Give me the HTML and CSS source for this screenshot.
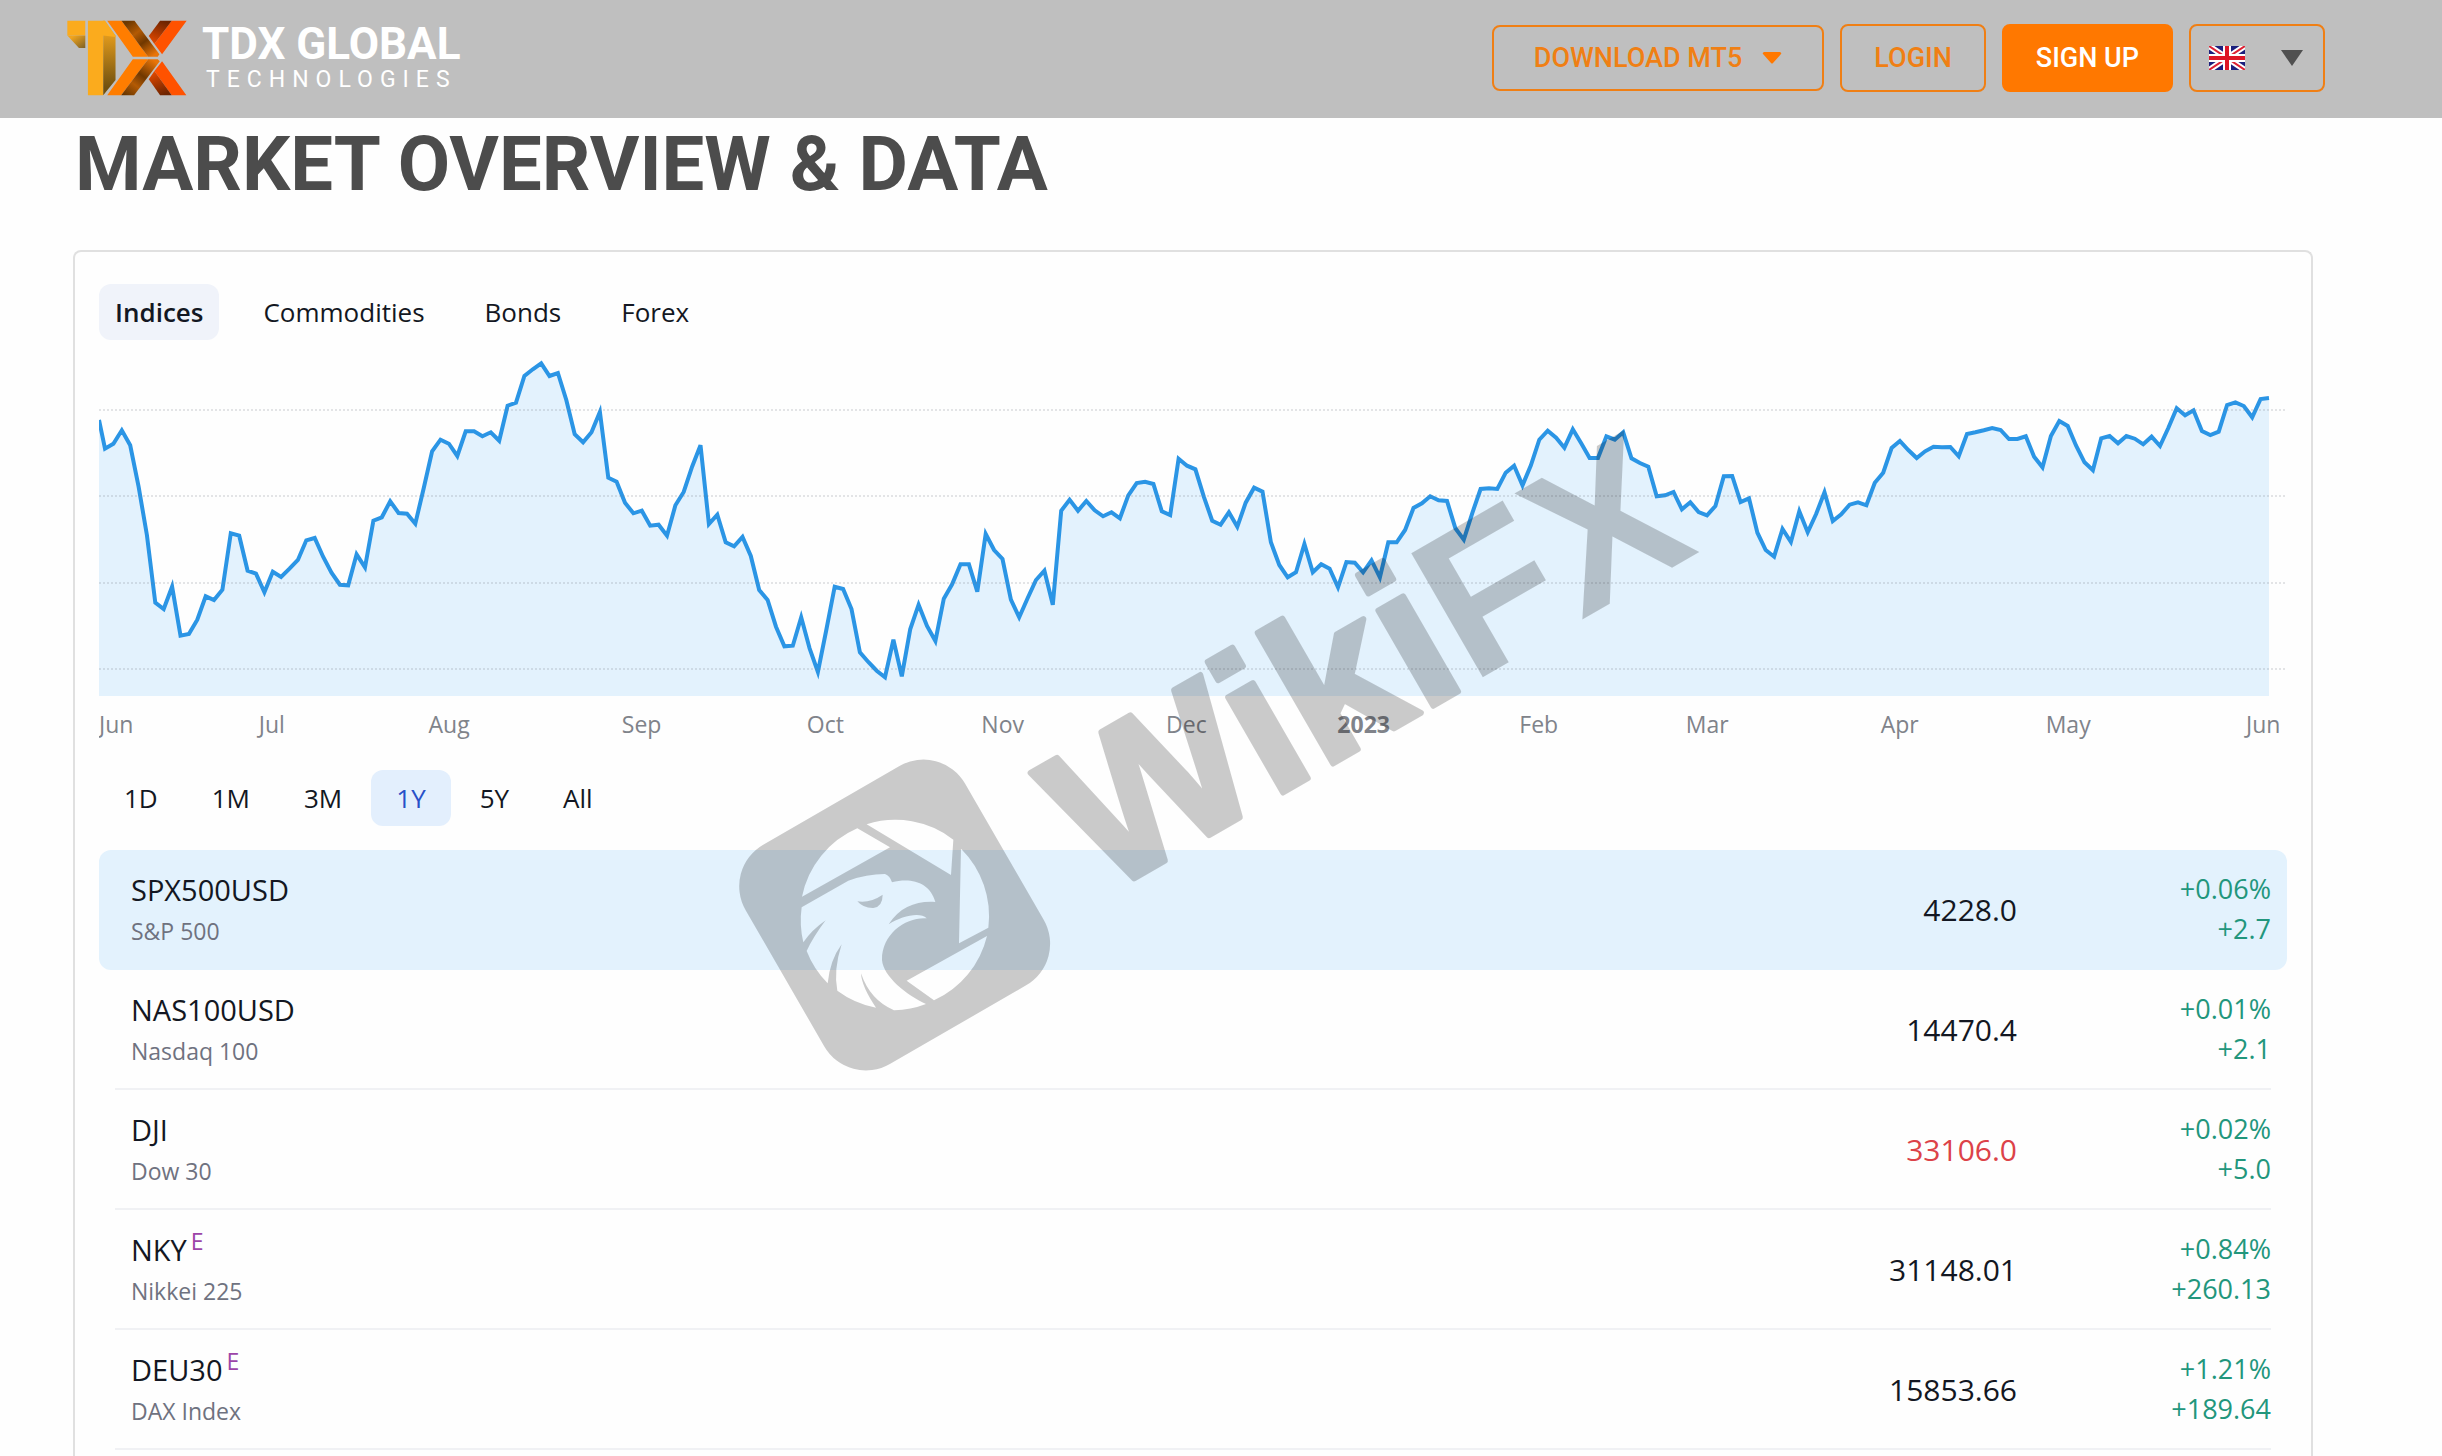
FILE: index.html
```html
<!DOCTYPE html>
<html lang="en">
<head>
    <meta charset="UTF-8">
    <meta name="viewport" content="width=device-width, initial-scale=1.0">
    <title>TDX Global Technologies - Market Overview</title>
    <link rel="stylesheet" href="styles.css">
</head>
<body>

<header class="topbar">
    <a class="brand" href="#">
        <svg class="brand-mark" viewBox="82 61 361 226" aria-hidden="true">
            <defs>
                <linearGradient id="foldT" x1="0" y1="0" x2="1" y2="1">
                    <stop offset="0.2" stop-color="#f0a41e"/>
                    <stop offset="1" stop-color="#7c6026"/>
                </linearGradient>
                <linearGradient id="foldD" x1="0" y1="0" x2="0" y2="1">
                    <stop offset="0.1" stop-color="#f0a41e"/>
                    <stop offset="0.9" stop-color="#70500f"/>
                </linearGradient>
                <linearGradient id="foldX1" x1="0" y1="0" x2="0.8" y2="1">
                    <stop offset="0.1" stop-color="#6b3800"/>
                    <stop offset="0.4" stop-color="#b35a04"/>
                    <stop offset="0.65" stop-color="#703800"/>
                    <stop offset="1" stop-color="#e87408"/>
                </linearGradient>
                <linearGradient id="foldX2" x1="0.8" y1="0" x2="0" y2="1">
                    <stop offset="0" stop-color="#e87408"/>
                    <stop offset="0.4" stop-color="#703800"/>
                    <stop offset="0.65" stop-color="#b35a04"/>
                    <stop offset="1" stop-color="#5b3000"/>
                </linearGradient>
                <linearGradient id="foldR1" x1="0.6" y1="0" x2="0.2" y2="1">
                    <stop offset="0" stop-color="#6e2400"/>
                    <stop offset="1" stop-color="#e64a00"/>
                </linearGradient>
                <linearGradient id="foldR2" x1="0.2" y1="0" x2="0.6" y2="1">
                    <stop offset="0" stop-color="#e64a00"/>
                    <stop offset="1" stop-color="#6e2400"/>
                </linearGradient>
            </defs>
            <path fill="#fbab1d" d="M83 62h54v44H83zM145 62h46v224h-46z"/>
            <path fill="url(#foldT)" d="M83 106h54v38h-19z"/>
            <path fill="url(#foldD)" d="M191 62h5l32 45v133l-37 46z"/>
            <path fill="#fbab1d" d="M190 62h6l32 45v4l-38-5z"/>
            <path fill="#ff7d00" d="M203 62h43l80 108h-46zM280 178h46l-81 108h-42z"/>
            <path fill="url(#foldX1)" d="M246 62h39l75 101-5 7h-29z"/>
            <path fill="url(#foldX2)" d="M326 178h29l6 6-77 102h-39z"/>
            <path fill="#ff5200" d="M397 62h45l-74 101-23-31zM368 184l73 102h-44l-52-73z"/>
            <path fill="url(#foldR1)" d="M362 62h35l-52 70-17-24z"/>
            <path fill="url(#foldR2)" d="M345 213l52 73h-35l-34-48z"/>
        </svg>
        <span class="brand-text">
            <span class="brand-name">TDX GLOBAL</span>
            <span class="brand-sub">TECHNOLOGIES</span>
        </span>
    </a>
    <nav class="actions">
        <button type="button" class="btn btn-download">
            DOWNLOAD MT5
            <svg class="caret" viewBox="0 0 20 12" aria-hidden="true"><path d="M2 0h16q2 1 1 2l-8 9q-1 1-2 0L1 2q-1-1 1-2z"/></svg>
        </button>
        <button type="button" class="btn">LOGIN</button>
        <button type="button" class="btn btn-fill">SIGN UP</button>
        <button type="button" class="btn btn-lang" aria-label="Language: English">
            <svg class="flag" viewBox="0 0 36 24" aria-hidden="true">
                <path fill="#1c1f7d" d="M0 0h36v24H0z"/>
                <path stroke="#fff" stroke-width="6" d="M0 0l36 24M36 0L0 24"/>
                <path stroke="#dd2234" stroke-width="2" d="M0 0l36 24M36 0L0 24"/>
                <path stroke="#fff" stroke-width="8" d="M18 0v24M0 12h36"/>
                <path stroke="#dd1626" stroke-width="4" d="M18 0v24M0 12h36"/>
            </svg>
            <svg class="arrow" viewBox="0 0 22 16" aria-hidden="true"><path d="M0 0h22L11 16z"/></svg>
        </button>
    </nav>
</header>

<main class="page">
    <h1>MARKET OVERVIEW &amp; DATA</h1>

    <section class="card">
        <div class="tabs">
            <button type="button" class="tab active">Indices</button>
            <button type="button" class="tab">Commodities</button>
            <button type="button" class="tab">Bonds</button>
            <button type="button" class="tab">Forex</button>
        </div>

        <svg class="chart" role="img" aria-label="S&amp;P 500, last year">
            <svg width="100%" height="356" viewBox="0 0 2188 356" preserveAspectRatio="none">
                <polygon id="area" class="area"/>
                <polyline id="line" class="line"/>
            </svg>
            <g class="grid">
                <line x1="0" x2="100%" y1="70" y2="70"/>
                <line x1="0" x2="100%" y1="156" y2="156"/>
                <line x1="0" x2="100%" y1="243" y2="243"/>
                <line x1="0" x2="100%" y1="329" y2="329"/>
            </g>
            <g class="months">
                <text x="0" y="393" class="first">Jun</text>
                <text x="7.9%" y="393">Jul</text>
                <text x="16%" y="393">Aug</text>
                <text x="24.8%" y="393">Sep</text>
                <text x="33.2%" y="393">Oct</text>
                <text x="41.3%" y="393">Nov</text>
                <text x="49.7%" y="393">Dec</text>
                <text x="57.8%" y="393" class="year">2023</text>
                <text x="65.8%" y="393">Feb</text>
                <text x="73.5%" y="393">Mar</text>
                <text x="82.3%" y="393">Apr</text>
                <text x="90%" y="393">May</text>
                <text x="99.7%" y="393" class="last">Jun</text>
            </g>
        </svg>

        <div class="ranges">
            <button type="button" class="range">1D</button>
            <button type="button" class="range">1M</button>
            <button type="button" class="range">3M</button>
            <button type="button" class="range active">1Y</button>
            <button type="button" class="range">5Y</button>
            <button type="button" class="range">All</button>
        </div>

        <table class="quotes">
            <tbody>
                <tr class="active">
                    <th scope="row">SPX500USD<small>S&amp;P 500</small></th>
                    <td class="price">4228.0</td>
                    <td class="change">+0.06%<br>+2.7</td>
                </tr>
                <tr>
                    <th scope="row">NAS100USD<small>Nasdaq 100</small></th>
                    <td class="price">14470.4</td>
                    <td class="change">+0.01%<br>+2.1</td>
                </tr>
                <tr>
                    <th scope="row">DJI<small>Dow 30</small></th>
                    <td class="price down">33106.0</td>
                    <td class="change">+0.02%<br>+5.0</td>
                </tr>
                <tr>
                    <th scope="row">NKY<sup>E</sup><small>Nikkei 225</small></th>
                    <td class="price">31148.01</td>
                    <td class="change">+0.84%<br>+260.13</td>
                </tr>
                <tr>
                    <th scope="row">DEU30<sup>E</sup><small>DAX Index</small></th>
                    <td class="price">15853.66</td>
                    <td class="change">+1.21%<br>+189.64</td>
                </tr>
            </tbody>
        </table>
    </section>
</main>

<!-- Watermark -->
<svg class="watermark" viewBox="730 300 1060 800" aria-hidden="true">
    <mask id="eagle" maskUnits="userSpaceOnUse" x="-20" y="-20" width="1100" height="1100">
        <rect x="144" y="145" width="760" height="760" rx="144" fill="#fff" transform="rotate(-30 524 525)"/>
        <path fill="#000" d="M412 265L510 322 246 470A285 285 0 0 1 412 265zM440 253A285 285 0 0 1 700 299L693 405zM723 326A285 285 0 0 1 805 563L717 610zM801 588A285 285 0 0 1 642 781L560 722z"/>
        <path fill="#000" d="M245 502L385 422Q440 402 495 402 510 408 516 427C570 412 630 425 646 486 590 482 540 500 506 553 545 528 600 515 620 535 560 530 485 580 486 660 490 710 560 765 618 792A285 285 0 0 1 522 811Q450 780 423 700 425 740 468 803A285 285 0 0 1 352 752Q340 690 365 613 330 660 323 730A285 285 0 0 1 260 633Q280 590 317 541 275 570 250 607A285 285 0 0 1 245 502z"/>
        <path fill="#fff" d="M412 484Q450 490 488 464 488 500 460 504 430 505 412 484z"/>
    </mask>
    <g transform="translate(720 740) scale(0.33333)">
        <rect x="40" y="40" width="970" height="970" mask="url(#eagle)"/>
    </g>
    <text transform="translate(1102 897) rotate(-30)"><tspan class="wm-wiki">Wiki</tspan>FX</text>
</svg>

<script>
    const closes = [
        326, 311, 271, 316, 440, 585, 788, 807, 740, 887, 882, 839, 769, 780, 749, 580, 587, 692, 701, 757,
        695, 711, 686, 660, 601, 594, 650, 698, 734, 736, 643, 682, 542, 532, 484, 519, 521, 551, 445, 334,
        299, 311, 348, 274, 274, 289, 277, 302, 197, 188, 108, 88, 70, 108, 99, 180, 283, 307, 277, 216,
        413, 425, 488, 520, 512, 557, 554, 587, 496, 456, 380, 316, 552, 524, 607, 619, 591, 648, 750, 780,
        860, 919, 917, 832, 925, 996, 870, 740, 747, 807, 937, 966, 992, 1012, 899, 1009, 868, 794, 858, 903,
        776, 733, 673, 673, 755, 582, 630, 657, 779, 832, 775, 720, 692, 794, 512, 479, 512, 483, 511, 529,
        517, 535, 466, 429, 425, 432, 514, 525, 356, 377, 388, 470, 542, 554, 517, 560, 488, 443, 455, 607,
        675, 712, 697, 612, 697, 673, 686, 742, 666, 668, 697, 661, 712, 607, 607, 570, 504, 490, 469, 481,
        483, 565, 599, 520, 447, 445, 447, 398, 377, 436, 376, 299, 272, 293, 323, 268, 310, 354, 354, 289,
        299, 277, 355, 369, 380, 469, 466, 456, 508, 487, 516, 526, 498, 409, 408, 486, 475, 578, 630, 650,
        567, 606, 514, 577, 522, 457, 543, 523, 494, 487, 496, 428, 398, 324, 303, 330, 354, 334, 320, 322,
        321, 349, 282, 277, 271, 264, 270, 297, 297, 289, 350, 382, 288, 243, 258, 317, 367, 391, 295, 288,
        310, 288, 296, 313, 290, 318, 264, 205, 226, 211, 273, 285, 275, 195, 187, 198, 232, 177, 174
    ];
    const step = (2170 - 6) / (closes.length - 1);
    const points = ['0,80'];

    closes.forEach(function(value, i) {
        points.push((6 + i * step).toFixed(1) + ',' + (value / 3).toFixed(1));
    });

    document.getElementById('line').setAttribute('points', points.join(' '));
    document.getElementById('area').setAttribute('points', '0,356 ' + points.join(' ') + ' 2170,356');
</script>

</body>
</html>
```
FILE: styles.css
```css
* {
    box-sizing: border-box;
}
body {
    display: flex;
    flex-direction: column;
    position: relative;
    height: 100vh;
    margin: 0;
    overflow: hidden;
    background-color: #fefefe;
    color: #131722;
    font-family: "Open Sans", "Noto Sans", sans-serif;
}
button {
    border: none;
    background: none;
    color: inherit;
    font: inherit;
    cursor: pointer;
}

/* Header */
.topbar {
    display: flex;
    flex-shrink: 0;
    align-items: center;
    justify-content: space-between;
    height: 118px;
    padding: 0 117px 2px 67px;
    background-color: #bfbfbf;
    font-family: Roboto, sans-serif;
}
.brand {
    display: flex;
    align-items: center;
    gap: 15px;
    color: #fff;
    text-decoration: none;
}
.brand-mark {
    width: 120px;
    height: 76px;
}
.brand-text {
    display: flex;
    flex-direction: column;
}
.brand-name {
    font-size: 44px;
    font-weight: 700;
    line-height: 44px;
}
.brand-sub {
    padding-left: 4px;
    font-size: 23px;
    line-height: 28px;
    letter-spacing: 7px;
}
.actions {
    display: flex;
    align-items: center;
    gap: 16px;
}
.btn {
    display: flex;
    align-items: center;
    height: 68px;
    padding: 0 32px;
    border: 2px solid #f07f14;
    border-radius: 8px;
    color: #f07f14;
    font-size: 27px;
    font-weight: 500;
}
.btn-download {
    gap: 20px;
    height: 66px;
    padding: 0 40px;
}
.caret {
    width: 20px;
    height: 12px;
    fill: #ff7800;
}
.btn-fill {
    border-color: #ff7800;
    background-color: #ff7800;
    color: #fff;
}
.btn-lang {
    gap: 36px;
    padding: 0 20px 0 18px;
}
.flag {
    width: 36px;
    height: 24px;
}
.arrow {
    width: 22px;
    height: 16px;
    fill: #505050;
}

/* Market overview */
.page {
    display: flex;
    flex: 1;
    flex-direction: column;
    padding: 0 129px 0 73px;
}
h1 {
    margin: 0;
    padding: 6px 0 46px 2px;
    color: #4c4c4c;
    font-family: Roboto, sans-serif;
    font-size: 76px;
    font-weight: 700;
    line-height: 80px;
}
.card {
    flex: 1;
    padding: 32px 24px 0;
    border: 2px solid #e0e0e0;
    border-bottom: none;
    border-radius: 8px 8px 0 0;
}
.tabs {
    display: flex;
    gap: 28px;
}
.tab {
    height: 56px;
    padding: 0 16px;
    border-radius: 12px;
    font-size: 26px;
}
.tab.active {
    background-color: #f0f3fa;
    font-weight: 600;
}
.chart {
    display: block;
    width: 100%;
    height: 430px;
}
.area {
    fill: #e3f2fd;
}
.line {
    fill: none;
    stroke: #2b95e5;
    stroke-width: 4;
}
.grid line {
    stroke: #787b86;
    stroke-opacity: 0.2;
    stroke-width: 2;
    stroke-dasharray: 2 2;
}
.months text {
    fill: #80838a;
    font-size: 23px;
    text-anchor: middle;
}
.months .first {
    text-anchor: start;
}
.months .last {
    text-anchor: end;
}
.months .year {
    font-weight: 700;
}
.ranges {
    display: flex;
    gap: 4px;
    margin-bottom: 24px;
}
.range {
    height: 56px;
    padding: 0 25px;
    border-radius: 12px;
    font-size: 26px;
}
.range.active {
    background-color: #e3effd;
    color: #2850c8;
}

/* Quotes */
.quotes {
    width: 100%;
    border-collapse: separate;
    border-spacing: 0;
}
.quotes tr {
    position: relative;
    height: 120px;
}
.quotes tr::after {
    content: "";
    position: absolute;
    right: 16px;
    bottom: 0;
    left: 16px;
    height: 2px;
    background-color: #f0f1f4;
}
.quotes tr.active::after {
    display: none;
}
.quotes .active th,
.quotes .active td {
    background-color: #e3f2fd;
}
.quotes .active th {
    border-radius: 12px 0 0 12px;
}
.quotes .active td:last-child {
    border-radius: 0 12px 12px 0;
}
.quotes th {
    padding: 0 0 0 32px;
    font-size: 29px;
    font-weight: 400;
    line-height: 42px;
    text-align: left;
}
.quotes small {
    display: block;
    color: #6f7280;
    font-size: 23px;
    line-height: 40px;
}
.quotes sup {
    margin-left: 4px;
    color: #9c45a8;
    font-size: 23px;
    line-height: 0;
}
.quotes td {
    padding: 0 0 2px;
    text-align: right;
}
.quotes .price {
    font-size: 30px;
}
.quotes .down {
    color: #dc4248;
}
.quotes .change {
    width: 270px;
    padding-right: 16px;
    color: #22967c;
    font-size: 27px;
    line-height: 40px;
}

.watermark {
    position: absolute;
    top: 300px;
    left: 730px;
    width: 1060px;
    height: 800px;
    opacity: 0.2;
    pointer-events: none;
}
.watermark text {
    font-family: "Liberation Sans", Arial, sans-serif;
    font-size: 208px;
    font-weight: 700;
}
.watermark .wm-wiki {
    stroke: #000;
    stroke-width: 6;
    stroke-linejoin: round;
}
```
